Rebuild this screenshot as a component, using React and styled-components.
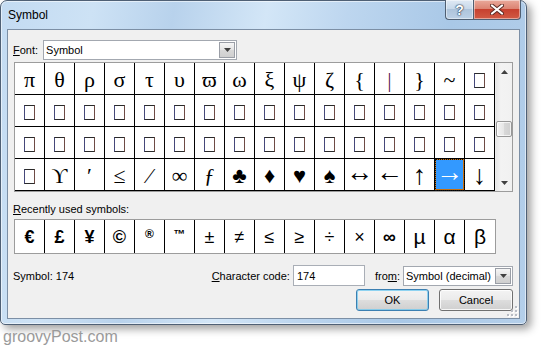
import React from "react";
import styled, { createGlobalStyle } from "styled-components";

const GlobalStyle = createGlobalStyle`
  html, body { margin: 0; padding: 0; background: #fff; }
  body {
    font-family: "Liberation Sans", Arial, sans-serif;
    font-size: 11px;
    color: #000;
  }
`;

const BOX = null;

const ROWS = [
  ["π", "θ", "ρ", "σ", "τ", "υ", "ϖ", "ω", "ξ", "ψ", "ζ", "{", "|", "}", "~", BOX],
  Array(16).fill(BOX),
  Array(16).fill(BOX),
  [BOX, "ϒ", "′", "≤", "⁄", "∞", "ƒ", "♣", "♦", "♥", "♠", "↔", "←", "↑", "→", "↓"],
];

// arrows in the Symbol font are much wider than the serif ones
const GLYPH_SIZE = { "↔": 27, "←": 27, "→": 27, "↑": 27, "↓": 27 };
const LIFTED = ["↔", "←", "→"];

const SELECTED = "3-14";

const RECENT = [
  { ch: "€", kind: "bold" },
  { ch: "£", kind: "bold" },
  { ch: "¥", kind: "bold" },
  { ch: "©", kind: "bold" },
  { ch: "®", kind: "small" },
  { ch: "™", kind: "small" },
  { ch: "±" },
  { ch: "≠" },
  { ch: "≤" },
  { ch: "≥" },
  { ch: "÷" },
  { ch: "×" },
  { ch: "∞", kind: "bold" },
  { ch: "µ", kind: "greek" },
  { ch: "α", kind: "greek" },
  { ch: "β", kind: "greek" },
];

const Arrow = ({ down }) => (
  <svg width="7" height="4" viewBox="0 0 7 4">
    <path d={down ? "M0 0h7L3.5 4z" : "M0 4h7L3.5 0z"} fill="#404040" />
  </svg>
);

const ResizeGrip = () => (
  <svg width="12" height="12" viewBox="0 0 12 12">
    {[
      [9, 1], [9, 5], [5, 5], [9, 9], [5, 9], [1, 9],
    ].map(([x, y]) => (
      <g key={`${x}-${y}`}>
        <rect x={x + 1} y={y + 1} width="2" height="2" fill="#fff" />
        <rect x={x} y={y} width="2" height="2" fill="#b8bcc4" />
      </g>
    ))}
  </svg>
);

const CloseGlyph = () => (
  <svg width="14" height="11" viewBox="0 0 14 11">
    <path d="M2 1.5L12 9.5M12 1.5L2 9.5" stroke="#5a2a24" strokeWidth="4" strokeLinecap="round" />
    <path d="M2 1.5L12 9.5M12 1.5L2 9.5" stroke="#fff" strokeWidth="2.2" strokeLinecap="round" />
  </svg>
);

export default function App() {
  return (
    <>
      <GlobalStyle />
      <Page>
        <Window>
          <TitleBar>
            <Title>Symbol</Title>
            <CaptionButtons>
              <HelpButton>?</HelpButton>
              <CloseButton>
                <CloseGlyph />
              </CloseButton>
            </CaptionButtons>
          </TitleBar>
          <Client>
            <FontRow>
              <Label>
                <u>F</u>ont:
              </Label>
              <Combo $width={194}>
                <ComboText>Symbol</ComboText>
                <ComboArrow>
                  <Arrow down />
                </ComboArrow>
              </Combo>
            </FontRow>

            <GridFrame>
              <Grid>
                {ROWS.map((row, r) =>
                  row.map((ch, c) => {
                    const selected = `${r}-${c}` === SELECTED;
                    return (
                      <Cell
                        key={`${r}-${c}`}
                        $selected={selected}
                        $bar={ch === "|"}
                        $size={GLYPH_SIZE[ch] || 22}
                        $lift={LIFTED.includes(ch)}
                      >
                        {ch === BOX ? <MissingGlyph /> : ch}
                      </Cell>
                    );
                  })
                )}
              </Grid>
              <ScrollBar>
                <ScrollButton>
                  <Arrow />
                </ScrollButton>
                <Track>
                  <Thumb $offset={41} />
                </Track>
                <ScrollButton>
                  <Arrow down />
                </ScrollButton>
              </ScrollBar>
            </GridFrame>

            <SectionLabel>
              <u>R</u>ecently used symbols:
            </SectionLabel>
            <RecentRow>
              {RECENT.map(({ ch, kind }, i) => (
                <RecentCell key={i} $kind={kind}>
                  {ch}
                </RecentCell>
              ))}
            </RecentRow>

            <InfoRow>
              <SymbolInfo>Symbol: 174</SymbolInfo>
              <CodeLabel>
                <u>C</u>haracter code:
              </CodeLabel>
              <TextInput>174</TextInput>
              <FromLabel>
                fro<u>m</u>:
              </FromLabel>
              <Combo $width={110}>
                <ComboText>Symbol (decimal)</ComboText>
                <ComboArrow>
                  <Arrow down />
                </ComboArrow>
              </Combo>
            </InfoRow>

            <ButtonRow>
              <PushButton $default $width={73}>OK</PushButton>
              <PushButton $width={74}>Cancel</PushButton>
            </ButtonRow>

            <Grip>
              <ResizeGrip />
            </Grip>
          </Client>
        </Window>
        <Watermark>groovyPost.com</Watermark>
      </Page>
    </>
  );
}

const Page = styled.div`
  width: 548px;
  height: 347px;
  overflow: hidden;
`;

const Window = styled.div`
  width: 527px;
  height: 325px;
  box-sizing: border-box;
  display: flex;
  flex-direction: column;
  padding: 0 6px 5px;
  border: 1px solid #4f6075;
  border-radius: 7px 7px 5px 5px;
  background: linear-gradient(
    100deg,
    #c3dbf2 0%,
    #cde2f5 16%,
    #b8d2ec 30%,
    #d3e6f7 46%,
    #bdd6ef 60%,
    #a9c8e7 78%,
    #b4cfea 100%
  );
  box-shadow: inset 0 0 0 1px rgba(255, 255, 255, 0.55),
    4px 4px 9px rgba(0, 0, 0, 0.38);
`;

const TitleBar = styled.div`
  height: 28px;
  flex: none;
  display: flex;
  justify-content: space-between;
  align-items: flex-start;
`;

const Title = styled.div`
  padding: 7px 0 0 1px;
  font-size: 12px;
  line-height: 15px;
  color: #000;
`;

const CaptionButtons = styled.div`
  display: flex;
  margin: -1px -1px 0 0;
`;

const CaptionBase = styled.div`
  height: 20px;
  box-sizing: border-box;
  display: flex;
  align-items: center;
  justify-content: center;
  border: 1px solid #4f5f72;
  border-top: none;
  box-shadow: inset 0 0 0 1px rgba(255, 255, 255, 0.45);
`;

const HelpButton = styled(CaptionBase)`
  width: 28px;
  border-right: none;
  border-radius: 0 0 0 4px;
  background: linear-gradient(#dfe9f4 0%, #c8d9ea 45%, #aec4db 50%, #bcd1e6 100%);
  font: bold 14px "Liberation Sans", Arial, sans-serif;
  color: #fff;
  text-shadow: 0 0 1px #2c3e55, 0 0 1px #2c3e55, 0 0 2px #2c3e55;
`;

const CloseButton = styled(CaptionBase)`
  width: 48px;
  border-radius: 0 0 4px 0;
  background: linear-gradient(#e9a99b 0%, #dc8473 45%, #c7412f 50%, #d15a44 100%);
`;

const Client = styled.div`
  position: relative;
  flex: 1;
  display: flex;
  flex-direction: column;
  align-items: flex-start;
  padding: 10px 6px 0;
  border: 1px solid #7c8fa5;
  background: #f0f0f0;
`;

const FontRow = styled.div`
  display: flex;
  align-items: center;
  gap: 5px;
  height: 20px;
  margin: 0 0 2px -1px;
`;

const Label = styled.span`
  line-height: 14px;
  white-space: nowrap;
`;

const Combo = styled.div`
  width: ${(p) => p.$width}px;
  height: 20px;
  box-sizing: border-box;
  display: flex;
  align-items: stretch;
  border: 1px solid #a3a8b0;
  background: #fff;
`;

const ComboText = styled.div`
  flex: 1;
  padding-left: 2px;
  display: flex;
  align-items: center;
  white-space: nowrap;
  overflow: hidden;
`;

const ComboArrow = styled.div`
  width: 16px;
  margin: 1px;
  box-sizing: border-box;
  display: flex;
  align-items: center;
  justify-content: center;
  border: 1px solid #9a9ea6;
  background: linear-gradient(#f6f6f6, #e3e3e3 50%, #d8d8d8 51%, #cfcfcf);
`;

const GridFrame = styled.div`
  display: flex;
  border: 1px solid #9c9c9c;
  background: #fff;
`;

const Grid = styled.div`
  display: grid;
  grid-template-columns: repeat(16, 30px);
  grid-auto-rows: 32px;
`;

const Cell = styled.div`
  box-sizing: border-box;
  display: flex;
  align-items: center;
  justify-content: center;
  padding: ${(p) => (p.$lift ? "0 0 5px" : "2px 0 0")};
  border-right: 1px solid #000;
  border-bottom: 1px solid #000;
  font-family: "Liberation Serif", "DejaVu Serif", serif;
  font-size: ${(p) => p.$size}px;
  line-height: 1;
  color: ${(p) => (p.$selected ? "#fff" : p.$bar ? "#5a1d55" : "#000")};
  background: ${(p) => (p.$selected ? "#3399ff" : "#fff")};
  outline: ${(p) => (p.$selected ? "1px dotted #111" : "none")};
  outline-offset: -1px;
  box-shadow: ${(p) => (p.$selected ? "inset 0 0 0 1px #c8700e" : "none")};
`;

const MissingGlyph = styled.span`
  width: 11px;
  height: 15px;
  box-sizing: border-box;
  margin-top: 2px;
  border: 1px solid #2a2a2a;
  border-left-color: #45487a;
  border-right-color: #6e4b45;
`;

const ScrollBar = styled.div`
  width: 16px;
  display: flex;
  flex-direction: column;
  background: linear-gradient(90deg, #e6e6e6, #f3f3f3 30%, #f1f1f1);
  border-left: 1px solid #ececec;
`;

const ScrollButton = styled.div`
  height: 17px;
  display: flex;
  align-items: center;
  justify-content: center;
`;

const Track = styled.div`
  flex: 1;
`;

const Thumb = styled.div`
  height: 16px;
  margin: ${(p) => p.$offset}px 0 0 0;
  box-sizing: border-box;
  border: 1px solid #979797;
  border-radius: 2px;
  background: linear-gradient(90deg, #f3f3f3, #e6e6e6 50%, #d8d8d8 51%, #cfcfcf);
  box-shadow: inset 0 0 0 1px rgba(255, 255, 255, 0.7);
`;

const SectionLabel = styled(Label)`
  margin: 10px 0 0 -1px;
`;

const RecentRow = styled.div`
  display: flex;
  margin-top: 3px;
  border: 1px solid #9c9c9c;
  background: #fff;
`;

const RecentCell = styled.div`
  width: 30px;
  height: 33px;
  box-sizing: border-box;
  display: flex;
  align-items: center;
  justify-content: center;
  border-right: 1px solid #000;
  font-family: "Liberation Sans", "DejaVu Sans", sans-serif;
  line-height: 1;
  font-size: ${(p) => (p.$kind === "small" ? "12px" : p.$kind === "greek" ? "21px" : "18px")};
  font-weight: ${(p) => (p.$kind === "bold" || p.$kind === "small" ? 700 : 400)};
  padding-bottom: ${(p) => (p.$kind === "small" ? "6px" : "0")};
  &:last-child {
    border-right: none;
  }
`;

const InfoRow = styled.div`
  align-self: stretch;
  display: flex;
  align-items: center;
  height: 21px;
  margin-top: 11px;
`;

const SymbolInfo = styled(Label)`
  margin-left: -1px;
`;

const CodeLabel = styled(Label)`
  margin-left: auto;
  margin-right: 3px;
`;

const TextInput = styled.div`
  width: 72px;
  height: 21px;
  box-sizing: border-box;
  display: flex;
  align-items: center;
  padding-left: 3px;
  border: 1px solid #a9aeb6;
  background: #fff;
`;

const FromLabel = styled(Label)`
  margin: 0 3px 0 10px;
`;

const ButtonRow = styled.div`
  align-self: stretch;
  display: flex;
  justify-content: flex-end;
  gap: 10px;
  margin-top: 3px;
`;

const PushButton = styled.div`
  width: ${(p) => p.$width}px;
  height: 22px;
  box-sizing: border-box;
  display: flex;
  align-items: center;
  justify-content: center;
  border: 1px solid ${(p) => (p.$default ? "#3c7fb1" : "#707070")};
  border-radius: 3px;
  background: linear-gradient(#f3f3f3 0%, #ebebeb 48%, #dddddd 52%, #cfcfcf 100%);
  box-shadow: inset 0 0 0 1px
    ${(p) => (p.$default ? "rgba(110, 200, 240, 0.75)" : "rgba(255, 255, 255, 0.8)")};
`;

const Grip = styled.div`
  position: absolute;
  right: 1px;
  bottom: 1px;
  line-height: 0;
`;

const Watermark = styled.div`
  margin: 3px 0 0 3px;
  font-family: "Liberation Sans", Arial, sans-serif;
  font-size: 16px;
  line-height: 18px;
  color: #9a9a9a;
`;
